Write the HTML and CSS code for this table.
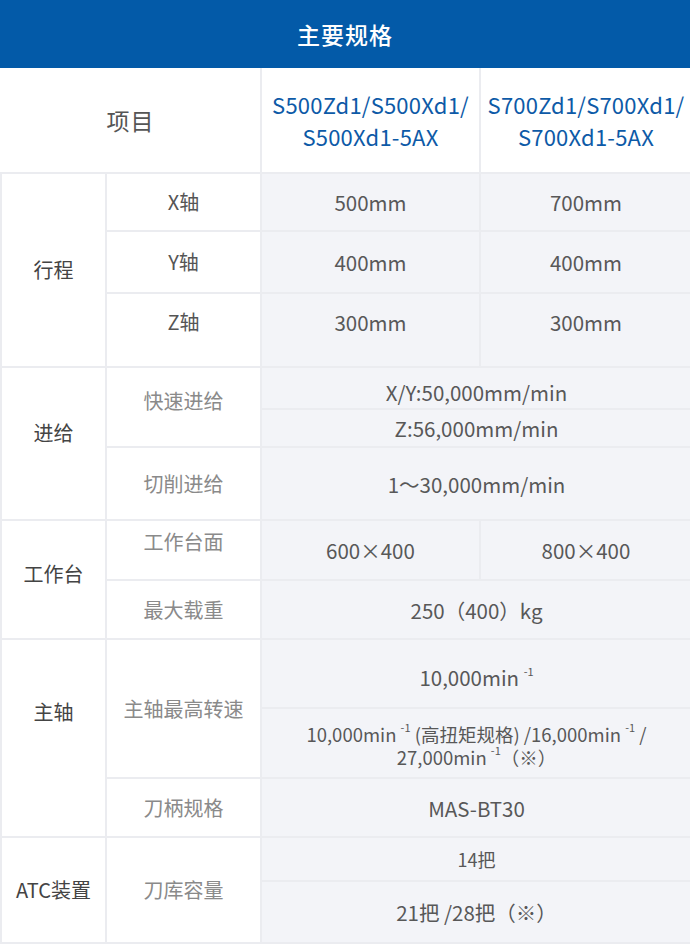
FILE: index.html
```html
<!DOCTYPE html>
<html lang="zh-CN">
<head>
<meta charset="utf-8">
<title>主要规格</title>
<link rel="stylesheet" href="styles.css">
</head>
<body>
<div class="title-bar">主要规格</div>
<table class="spec">
  <colgroup>
    <col class="c1"><col class="c2"><col class="c3"><col class="c4">
  </colgroup>
  <thead>
    <tr class="h-model">
      <th colspan="2" class="item-head">项目</th>
      <th class="model">S500Zd1/S500Xd1/<br>S500Xd1-5AX</th>
      <th class="model">S700Zd1/S700Xd1/<br>S700Xd1-5AX</th>
    </tr>
  </thead>
  <tbody>
    <tr class="r-x">
      <td rowspan="3" class="grp">行程</td>
      <td class="sub dark">X轴</td>
      <td class="val">500mm</td>
      <td class="val">700mm</td>
    </tr>
    <tr class="r-y">
      <td class="sub dark">Y轴</td>
      <td class="val">400mm</td>
      <td class="val">400mm</td>
    </tr>
    <tr class="r-z">
      <td class="sub dark top pt15">Z轴</td>
      <td class="val top pt15">300mm</td>
      <td class="val top pt15">300mm</td>
    </tr>
    <tr class="r-f1">
      <td rowspan="3" class="grp top pt52">进给</td>
      <td rowspan="2" class="sub top pt20">快速进给</td>
      <td colspan="2" class="val top pt11">X/Y:50,000mm/min</td>
    </tr>
    <tr class="r-f2">
      <td colspan="2" class="val">Z:56,000mm/min</td>
    </tr>
    <tr class="r-f3">
      <td class="sub">切削进给</td>
      <td colspan="2" class="val">1～30,000mm/min</td>
    </tr>
    <tr class="r-t1">
      <td rowspan="2" class="grp top pt40">工作台</td>
      <td class="sub top pt8">工作台面</td>
      <td class="val">600×400</td>
      <td class="val">800×400</td>
    </tr>
    <tr class="r-t2">
      <td class="sub">最大载重</td>
      <td colspan="2" class="val">250（400）kg</td>
    </tr>
    <tr class="r-s1">
      <td rowspan="3" class="grp top pt59">主轴</td>
      <td rowspan="2" class="sub">主轴最高转速</td>
      <td colspan="2" class="val top pt24">10,000min <sup>-1</sup></td>
    </tr>
    <tr class="r-s2">
      <td colspan="2" class="val small top pt14">10,000min <sup>-1</sup> (高扭矩规格) /16,000min <sup>-1</sup> /<br>27,000min <sup>-1</sup>（※）</td>
    </tr>
    <tr class="r-s3">
      <td class="sub">刀柄规格</td>
      <td colspan="2" class="val">MAS-BT30</td>
    </tr>
    <tr class="r-a1">
      <td rowspan="2" class="grp">ATC装置</td>
      <td rowspan="2" class="sub">刀库容量</td>
      <td colspan="2" class="val small">14把</td>
    </tr>
    <tr class="r-a2">
      <td colspan="2" class="val">21把 /28把（※）</td>
    </tr>
  </tbody>
</table>
</body>
</html>
```

FILE: styles.css
```css
html, body {
  margin: 0;
  padding: 0;
  background: #ffffff;
}

body {
  width: 690px;
  font-family: "Noto Sans CJK SC", "Noto Sans", sans-serif;
  color: #555555;
}

.title-bar {
  height: 68px;
  background: #035aa8;
  color: #ffffff;
  font-size: 23px;
  font-weight: 500;
  letter-spacing: 1px;
  display: flex;
  align-items: center;
  justify-content: center;
}

.spec {
  width: 690px;
  border-collapse: collapse;
  table-layout: fixed;
}

.c1 { width: 105px; }
.c2 { width: 155px; }
.c3 { width: 219px; }
.c4 { width: 211px; }

.spec th,
.spec td {
  border: 2px solid #ebecf0;
  padding: 0 2px;
  text-align: center;
  vertical-align: middle;
  font-weight: 400;
  line-height: 26px;
  box-sizing: border-box;
}

.spec thead th {
  border-top: none;
  border-bottom: none;
  background: #ffffff;
}

.spec thead th.item-head {
  border-left: none;
  font-size: 23px;
  color: #555555;
  letter-spacing: 1px;
}

.spec th.model {
  color: #0d5aa7;
  font-size: 22px;
  line-height: 32px;
  letter-spacing: 0.2px;
}

.spec tr > :last-child {
  border-right: none;
}

.grp {
  background: #ffffff;
  font-size: 20px;
  color: #444444;
}

.sub {
  background: #ffffff;
  font-size: 20px;
  color: #8a8a8a;
}

.sub.dark {
  color: #555555;
}

.val {
  background: #f3f4f8;
  font-size: 20.5px;
  color: #585858;
}

.spec td.small {
  font-size: 18.5px;
  line-height: 23px;
}

.spec .r-a1 td.small {
  font-size: 18px;
}

sup {
  font-size: 11px;
  line-height: 0;
  vertical-align: baseline;
  position: relative;
  top: -0.95em;
}

.spec td.top { vertical-align: top; }
.spec td.pt8 { padding-top: 8px; }
.spec td.pt11 { padding-top: 11px; }
.spec td.pt14 { padding-top: 14px; }
.spec td.pt15 { padding-top: 15px; }
.spec td.pt20 { padding-top: 20px; }
.spec td.pt24 { padding-top: 24px; }
.spec td.pt40 { padding-top: 40px; }
.spec td.pt52 { padding-top: 52px; }
.spec td.pt59 { padding-top: 59px; }

.h-model { height: 105px; }
.r-x { height: 58px; }
.r-y { height: 62px; }
.r-z { height: 74px; }
.r-f1 { height: 42px; }
.r-f2 { height: 38px; }
.r-f3 { height: 73px; }
.r-t1 { height: 60px; }
.r-t2 { height: 59px; }
.r-s1 { height: 69px; }
.r-s2 { height: 70px; }
.r-s3 { height: 59px; }
.r-a1 { height: 44px; }
.r-a2 { height: 62px; }
```
